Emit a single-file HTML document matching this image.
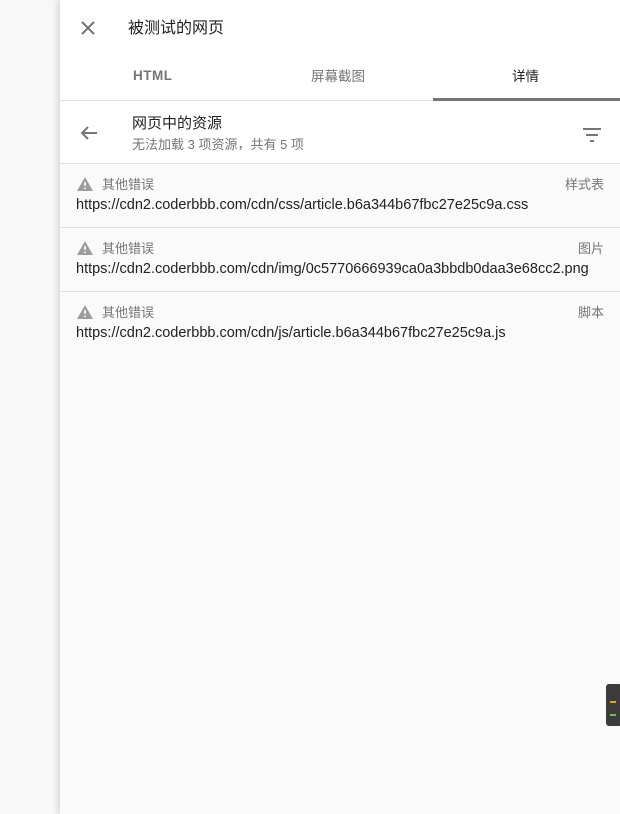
<!DOCTYPE html>
<html><head><meta charset="utf-8"><style>
*{margin:0;padding:0;box-sizing:border-box}
body{width:620px;height:814px;overflow:hidden;background:#f8f8f8;font-family:"Liberation Sans","Noto Sans CJK SC",sans-serif;position:relative}
.panel{position:absolute;left:60px;top:0;width:560px;height:814px;background:#fafafa;box-shadow:-3px 0 6px rgba(0,0,0,.12)}
.top{background:#fff;height:164px;border-bottom:1px solid #e0e0e0;position:relative}
.abs{position:absolute}
.t1{left:68px;top:14px;font-size:16px;color:#212121}
.tab{font-size:13.5px;color:#757575}
.sel{color:#212121}
.hr{left:0;top:100px;width:560px;height:1px;background:#e0e0e0}
.ind{left:373px;top:98px;width:187px;height:3px;background:#757575}
.row{height:64px;border-bottom:1px solid #e0e0e0;position:relative}
.err{position:absolute;left:42px;top:10px;font-size:13px;color:#757575}
.typ{position:absolute;right:16px;top:10px;font-size:13px;color:#757575}
.url{position:absolute;left:16px;top:33px;font-size:14.5px;color:#212121}
.warn{position:absolute;left:17px;top:13px}
</style></head><body>
<div class="panel">
<div class="top">
<svg class="abs" style="left:20px;top:20px" width="16" height="16" viewBox="0 0 16 16"><path d="M2 2L14 14M14 2L2 14" stroke="#757575" stroke-width="2"/></svg>
<div class="abs t1">被测试的网页</div>
<div class="abs tab" style="left:73px;top:68px;font-weight:bold;letter-spacing:.5px">HTML</div>
<div class="abs tab" style="left:251px;top:65px">屏幕截图</div>
<div class="abs tab sel" style="left:452px;top:65px">详情</div>
<div class="abs hr"></div>
<div class="abs ind"></div>
<svg class="abs" style="left:20px;top:125px" width="18" height="16" viewBox="0 0 18 16"><path d="M17 8H2M8 2L2 8L8 14" stroke="#757575" stroke-width="2" fill="none"/></svg>
<div class="abs" style="left:72px;top:112px;font-size:15px;color:#212121">网页中的资源</div>
<div class="abs" style="left:72px;top:134px;font-size:13px;color:#757575">无法加载 3 项资源，共有 5 项</div>
<svg class="abs" style="left:523px;top:128px" width="18" height="14" viewBox="0 0 18 14"><path d="M0 1H18M3 7H15M7 13H11" stroke="#757575" stroke-width="2"/></svg>
</div>
<div class="row"><svg class="warn" width="16" height="14" viewBox="0 0 16 14"><path d="M8 0L16 14H0Z" fill="#9e9e9e"/><path d="M8 5V9M8 10.5V12" stroke="#fff" stroke-width="1.6"/></svg><div class="err">其他错误</div><div class="typ">样式表</div><div class="url">https://cdn2.coderbbb.com/cdn/css/article.b6a344b67fbc27e25c9a.css</div></div>
<div class="row"><svg class="warn" width="16" height="14" viewBox="0 0 16 14"><path d="M8 0L16 14H0Z" fill="#9e9e9e"/><path d="M8 5V9M8 10.5V12" stroke="#fff" stroke-width="1.6"/></svg><div class="err">其他错误</div><div class="typ">图片</div><div class="url">https://cdn2.coderbbb.com/cdn/img/0c5770666939ca0a3bbdb0daa3e68cc2.png</div></div>
<div class="row" style="border-bottom:none"><svg class="warn" width="16" height="14" viewBox="0 0 16 14"><path d="M8 0L16 14H0Z" fill="#9e9e9e"/><path d="M8 5V9M8 10.5V12" stroke="#fff" stroke-width="1.6"/></svg><div class="err">其他错误</div><div class="typ">脚本</div><div class="url">https://cdn2.coderbbb.com/cdn/js/article.b6a344b67fbc27e25c9a.js</div></div>
</div>
<div class="abs" style="left:606px;top:684px;width:16px;height:42px;background:#3c3c3c;border-radius:3px">
<div class="abs" style="left:4px;top:30px;width:6px;height:2px;background:#66cc33"></div>
<div class="abs" style="left:4px;top:17px;width:6px;height:2px;background:#ff9900"></div>
</div>
</body></html>
